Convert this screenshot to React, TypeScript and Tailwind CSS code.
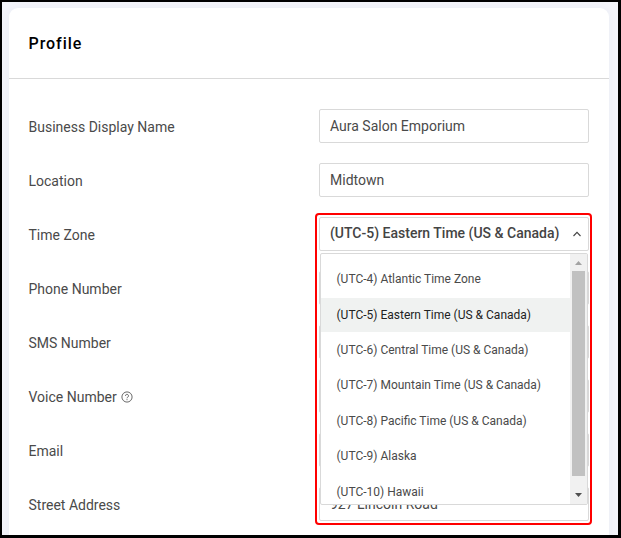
import React from "react";

const fields = [
  { label: "Business Display Name", value: "Aura Salon Emporium" },
  { label: "Location", value: "Midtown" },
  { label: "Time Zone", value: "(UTC-5) Eastern Time (US & Canada)" },
  { label: "Phone Number", value: "" },
  { label: "SMS Number", value: "" },
  { label: "Voice Number", value: "", help: true },
  { label: "Email", value: "" },
  { label: "Street Address", value: "927 Lincoln Road" },
];

const zones = [
  "(UTC-4) Atlantic Time Zone",
  "(UTC-5) Eastern Time (US & Canada)",
  "(UTC-6) Central Time (US & Canada)",
  "(UTC-7) Mountain Time (US & Canada)",
  "(UTC-8) Pacific Time (US & Canada)",
  "(UTC-9) Alaska",
  "(UTC-10) Hawaii",
];

const HelpIcon = () => (
  <svg
    className="mb-px ml-[4.5px] h-[12px] w-[12px] shrink-0"
    viewBox="0 0 12 12"
    fill="none"
    stroke="#444444"
    strokeWidth="0.8"
  >
    <circle cx="6" cy="6" r="5.1" />
    <path d="M4.5 4.9a1.5 1.5 0 1 1 2.3 1.2C6.2 6.5 6 6.7 6 7.3" />
    <path d="M6 8.2v1" />
  </svg>
);

const Scrollbar = () => (
  <div className="flex w-[17px] flex-col items-center bg-[#f1f1f1]">
    <svg className="h-[17px] w-[17px] shrink-0" viewBox="0 0 17 17">
      <path d="M5 11h7L8.5 7z" fill="#a3a3a3" />
    </svg>
    <div className="h-[205px] w-[13px] bg-[#c1c1c1]" />
    <div className="flex-1" />
    <svg className="h-[17px] w-[17px] shrink-0" viewBox="0 0 17 17">
      <path d="M5 6h7l-3.5 4z" fill="#505050" />
    </svg>
  </div>
);

const ZoneMenu = () => (
  <div className="absolute top-[36px] left-px z-10 flex h-[252px] w-[268px] overflow-hidden rounded-[2px] border border-[#d9d9d9] bg-white">
    <ul className="flex-1 pt-[8.5px]">
      {zones.map((zone, i) => (
        <li
          key={zone}
          className={
            i === 1
              ? "flex h-[35.4px] items-center border-b border-white bg-[#f0f2f1] pb-px pl-[15.5px] text-[12px] whitespace-nowrap text-[#222222]"
              : "flex h-[35.4px] items-center pb-[2px] pl-[15.5px] text-[12px] whitespace-nowrap text-[#4a4a4a]"
          }
        >
          {zone}
        </li>
      ))}
    </ul>
    <Scrollbar />
  </div>
);

const ZoneSelect = ({ value }: { value: string }) => (
  <div className="relative h-[34px] w-[270px]">
    <button
      type="button"
      className="flex h-[34px] w-full items-center justify-between rounded-[2px] border border-[#d9d9d9] bg-white pr-[6.5px] pb-px pl-[10px] text-[14px] font-medium whitespace-nowrap text-[#444444]"
    >
      {value}
      <svg
        className="mt-px h-[10px] w-[10px] shrink-0"
        viewBox="0 0 10 10"
        fill="none"
        stroke="#444444"
        strokeWidth="1.1"
      >
        <path d="M1.5 7 5 3.3 8.5 7" />
      </svg>
    </button>
    <ZoneMenu />
    <div className="pointer-events-none absolute -top-[4px] -left-[4px] z-20 h-[312px] w-[277px] rounded-[4px] border-2 border-[#ff0000]" />
  </div>
);

const App = () => {
  return (
    <div className="h-[538px] w-[621px] overflow-hidden border-t-2 border-r-[3px] border-b-[3px] border-l-2 border-black bg-[#f3f4fa] pt-[6px] pl-[7px] font-['Roboto',sans-serif]">
      <div className="h-[560px] w-[600px] rounded-t-[9px] bg-white shadow-[0_0_10px_rgba(60,70,110,0.04)]">
        <div className="flex h-[71px] items-center border-b border-[#d9d9d9] pt-px pl-[19.5px]">
          <h1 className="text-[16px] font-medium tracking-[0.95px] text-black">
            Profile
          </h1>
        </div>
        <div className="flex flex-col gap-[20px] pt-[30px] pr-[20px] pl-[19.5px]">
          {fields.map((field) => (
            <div key={field.label} className="flex h-[34px] justify-between">
              <label className="flex items-center pt-[3px] text-[14px] text-[#4a4a4a]">
                {field.label}
                {field.help && <HelpIcon />}
              </label>
              {field.label === "Time Zone" ? (
                <ZoneSelect value={field.value} />
              ) : (
                <div className="flex h-[34px] w-[270px] items-center rounded-[2px] border border-[#d9d9d9] pl-[10px] text-[14px] text-[#4a4a4a]">
                  {field.value}
                </div>
              )}
            </div>
          ))}
        </div>
      </div>
    </div>
  );
};

export default App;
